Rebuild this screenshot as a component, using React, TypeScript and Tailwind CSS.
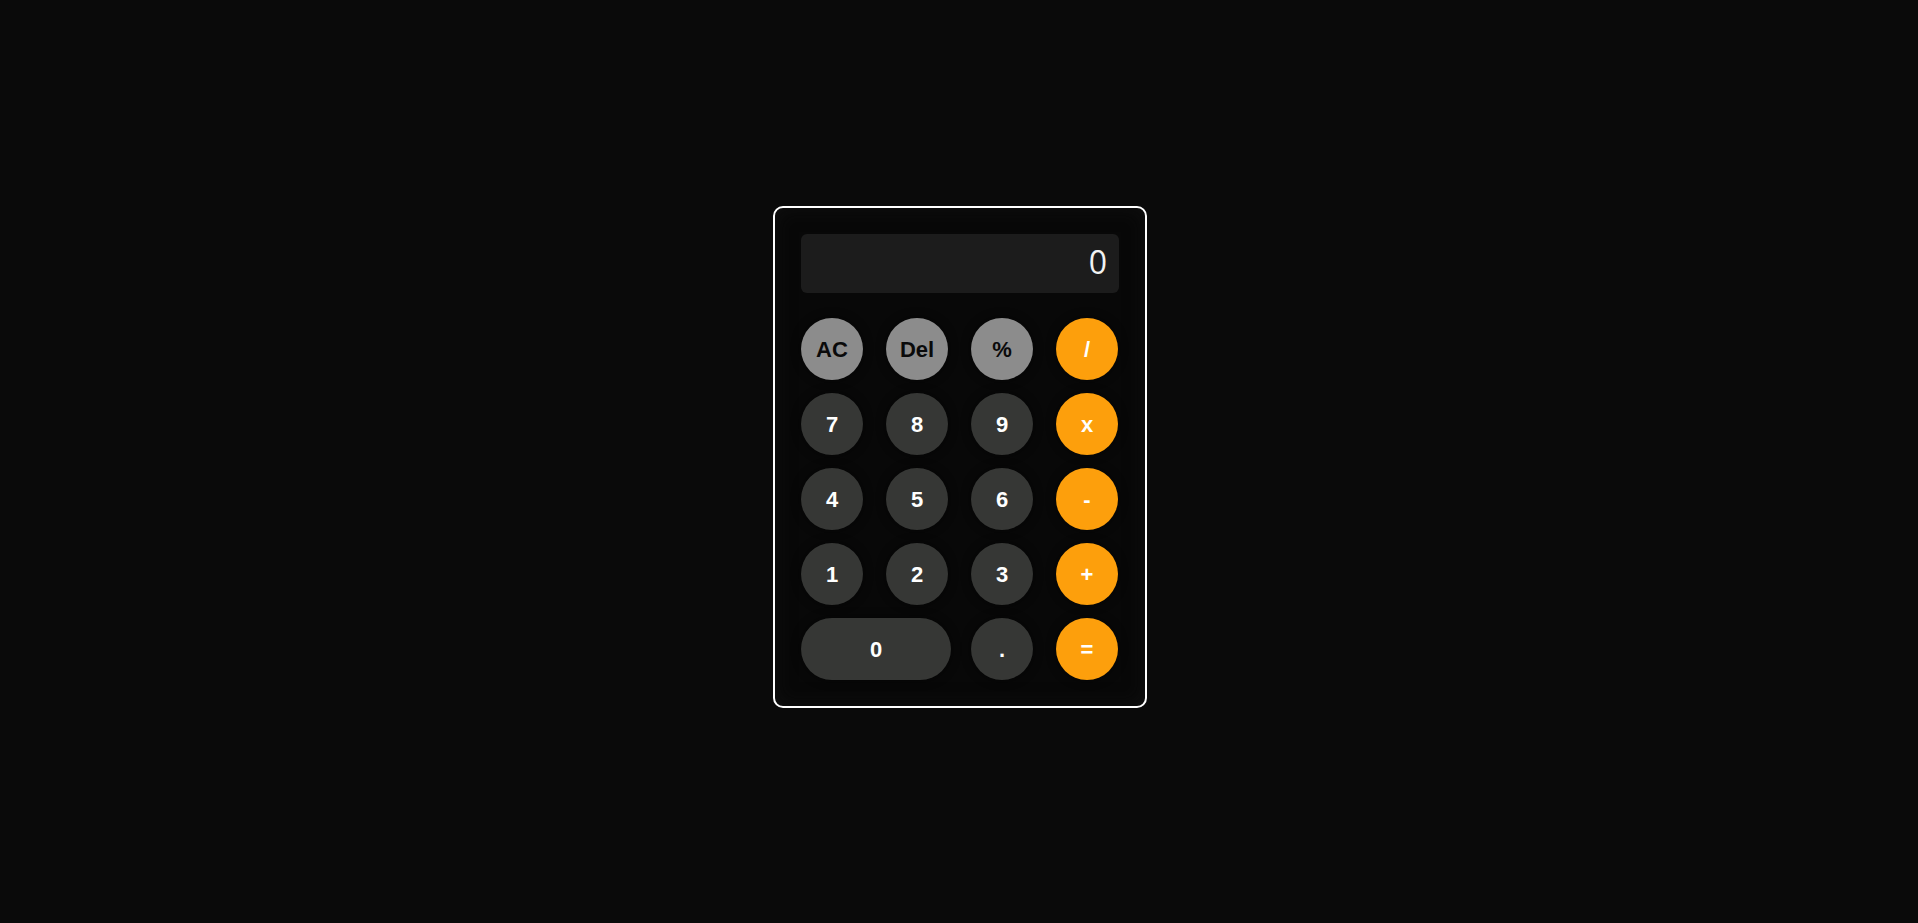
import React from "react";

type Kind = "fn" | "num" | "op";

const keys: { label: string; kind: Kind; wide?: boolean }[] = [
  { label: "AC", kind: "fn" },
  { label: "Del", kind: "fn" },
  { label: "%", kind: "fn" },
  { label: "/", kind: "op" },
  { label: "7", kind: "num" },
  { label: "8", kind: "num" },
  { label: "9", kind: "num" },
  { label: "x", kind: "op" },
  { label: "4", kind: "num" },
  { label: "5", kind: "num" },
  { label: "6", kind: "num" },
  { label: "-", kind: "op" },
  { label: "1", kind: "num" },
  { label: "2", kind: "num" },
  { label: "3", kind: "num" },
  { label: "+", kind: "op" },
  { label: "0", kind: "num", wide: true },
  { label: ".", kind: "num" },
  { label: "=", kind: "op" },
];

const kindClass: Record<Kind, string> = {
  fn: "bg-[#8c8c8c] text-[#0a0a0a]",
  num: "bg-[#363735] text-white",
  op: "bg-[#fd9f0c] text-white",
};

export default function App() {
  return (
    <div className="min-h-screen w-full bg-[#0a0a0a] flex items-center justify-center pb-[9px] pl-[2px]">
      <div className="w-[374px] border-2 border-white rounded-[10px] bg-[#080808] p-[26px] shadow-[inset_0_0_20px_rgba(20,20,20,0.6)]">
        <div className="h-[59px] rounded-md bg-[#1c1c1c] flex items-center justify-end pr-[12px] pb-[4px] text-[32px] text-[#f2f2f2] font-['Open_Sans',sans-serif]">
          0
        </div>
        <div className="mt-[25px] grid grid-cols-4 gap-x-[22px] gap-y-[13px]">
          {keys.map((k) => (
            <button
              key={k.label}
              className={`h-[62px] rounded-full flex items-center justify-center font-bold text-[22px] font-['Liberation_Sans',Arial,sans-serif] shadow-[0_0_10px_rgba(0,0,0,0.6)] ${
                kindClass[k.kind]
              } ${k.wide ? "col-span-2 w-[150px]" : "w-[62px]"}`}
            >
              {k.label}
            </button>
          ))}
        </div>
      </div>
    </div>
  );
}
